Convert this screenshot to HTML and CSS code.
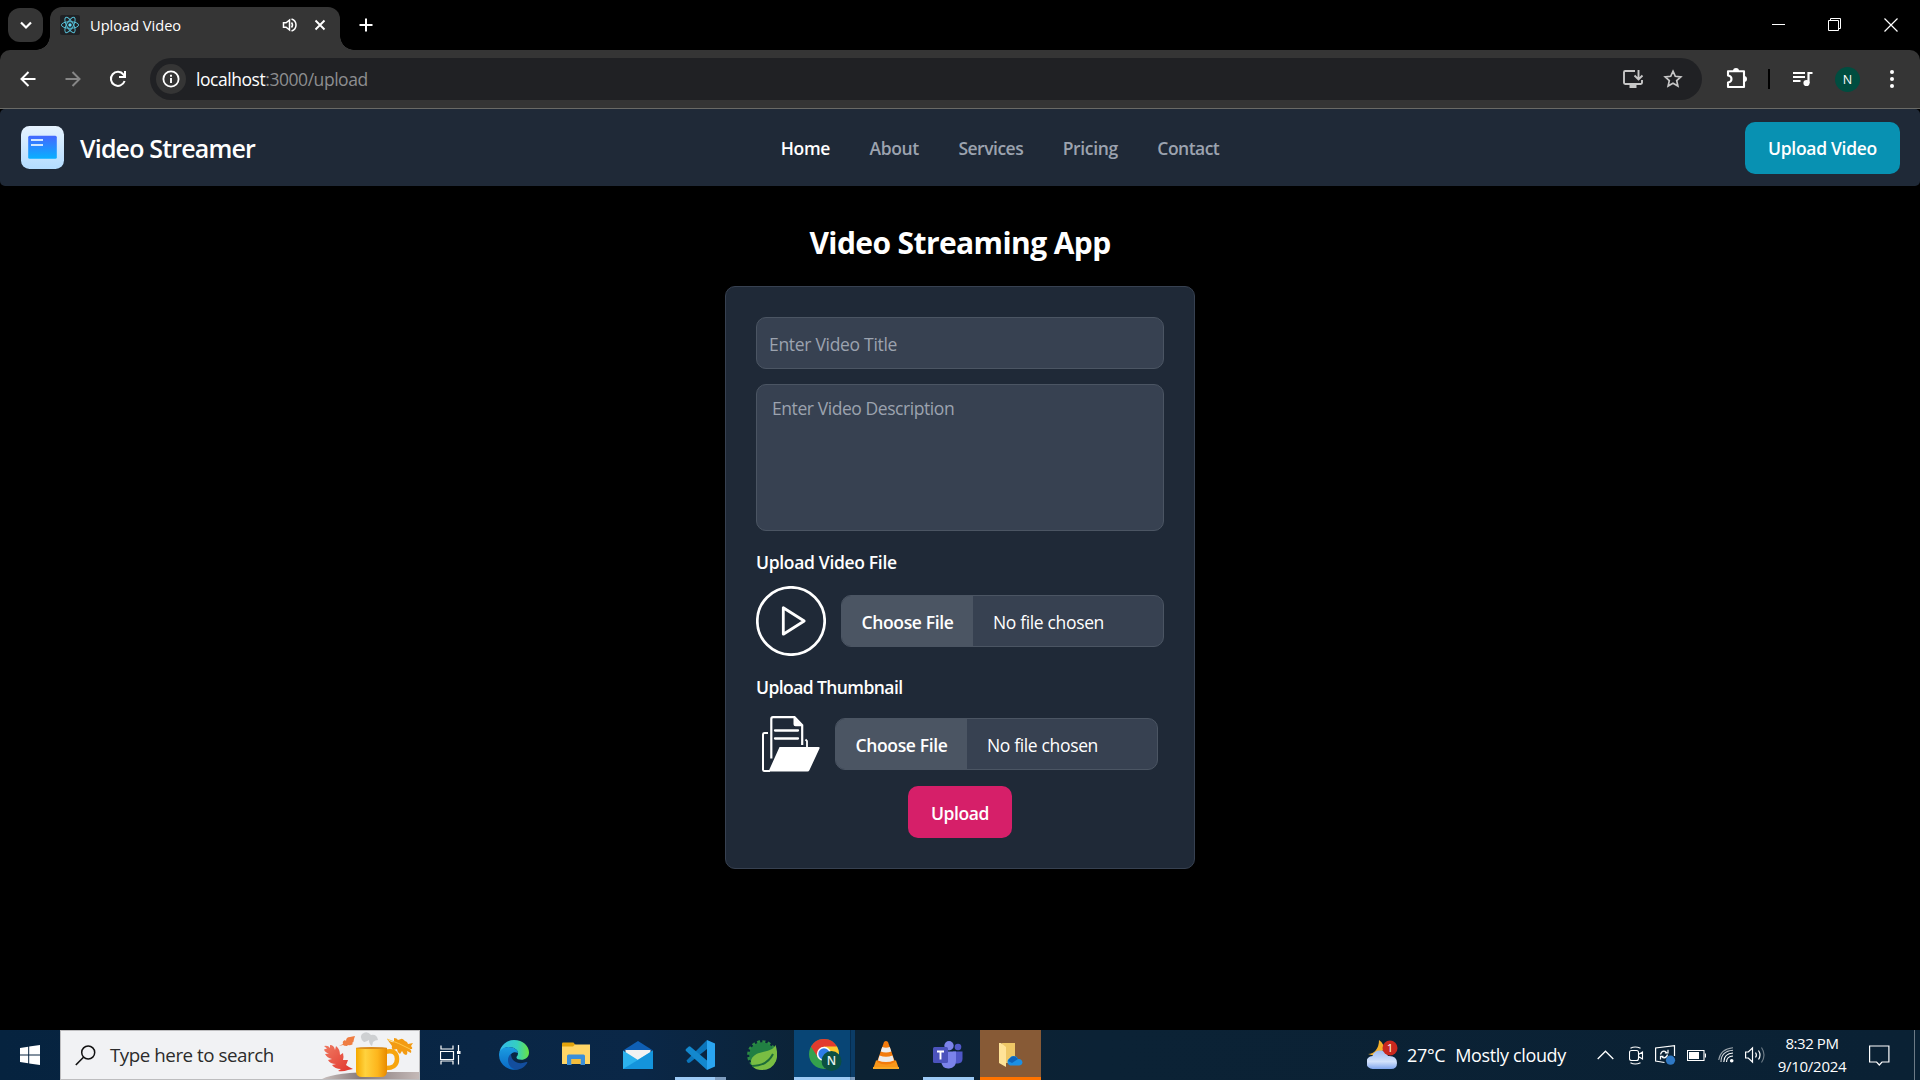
FILE: index.html
```html
<!DOCTYPE html>
<html lang="en">
<head>
<meta charset="utf-8">
<title>Upload Video</title>
<link rel="stylesheet" href="styles.css">
</head>
<body>
<div class="screen">
  <div class="tabstrip">
    <div class="tab-search"><svg width="36" height="34" viewBox="0 0 36 34"><path d="M13 14.500l5 5 5-5" fill="none" stroke="#fff" stroke-width="2.200"/></svg></div>
    <div class="tab">
      <svg class="favicon" width="20" height="20" viewBox="0 0 20 20"><rect width="20" height="20" rx="2" fill="#202124"/><g fill="none" stroke="#55bcd3" stroke-width="1"><ellipse cx="10" cy="10" rx="8.600" ry="3.300"/><ellipse cx="10" cy="10" rx="8.600" ry="3.300" transform="rotate(60 10 10)"/><ellipse cx="10" cy="10" rx="8.600" ry="3.300" transform="rotate(120 10 10)"/></g><circle cx="10" cy="10" r="1.700" fill="#61dafb"/></svg>
      <span class="tab-title">Upload Video</span>
      <svg class="speaker" width="16" height="16" viewBox="0 0 16 16"><path d="M1.500 5.800h2.600L7.500 3v10L4.100 10.200H1.500z" fill="none" stroke="#fff" stroke-width="1.500"/><path d="M9.500 5.500q2 2.500 0 5M9.500 2q4.500 1.500 4.500 6t-4.500 6" fill="none" stroke="#fff" stroke-width="1.500"/></svg>
      <svg width="12" height="12" viewBox="0 0 12 12"><path d="M1.500 1.500l9 9m0-9l-9 9" stroke="#fff" stroke-width="1.900"/></svg>
    </div>
    <svg class="newtab" width="14" height="14" viewBox="0 0 14 14"><path d="M7 .5v13M.5 7h13" stroke="#fff" stroke-width="2"/></svg>
    <div class="winctl">
      <svg width="13" height="13" viewBox="0 0 13 13"><path d="M0 6.500h13" stroke="#fff"/></svg>
      <svg width="13" height="13" viewBox="0 0 13 13"><path d="M.5 2.500h10v10H.5zM2.500 2.500v-2h10v10h-2" fill="none" stroke="#fff"/></svg>
      <svg width="14" height="14" viewBox="0 0 14 14"><path d="M.5.5l13 13m0-13l-13 13" stroke="#fff" stroke-width="1.200"/></svg>
    </div>
  </div>
  <div class="toolbar">
    <svg width="16" height="16" viewBox="0 0 16 16"><path d="M15.500 8H2M8.500 1L1.500 8l7 7" fill="none" stroke="#fff" stroke-width="2"/></svg>
    <svg width="16" height="16" viewBox="0 0 16 16"><path d="M.5 8H14M7.500 1l7 7-7 7" fill="none" stroke="#868686" stroke-width="2"/></svg>
    <svg width="18" height="18" viewBox="0 0 18 18"><path d="M15.600 11A7 7 0 1 1 14.500 4.600L16 6.500" fill="none" stroke="#fff" stroke-width="2"/><path d="M16 1v6h-6" fill="none" stroke="#fff" stroke-width="2"/></svg>
    <div class="omnibox">
      <div class="info"><svg width="18" height="18" viewBox="0 0 18 18"><circle cx="9" cy="9" r="7.600" fill="none" stroke="#fff" stroke-width="1.800"/><path d="M9 8v5M9 4.800v1.900" stroke="#fff" stroke-width="1.900"/></svg></div>
      <span class="url">localhost<i>:3000/upload</i></span>
      <svg class="install" width="22" height="20" viewBox="0 0 22 20"><path d="M13 2H3.200Q2 2 2 3.200v10.600Q2 15 3.200 15h15.600q1.200 0 1.200-1.200V11" fill="none" stroke="#c7c7c7" stroke-width="1.900"/><path d="M7.500 16h7v3h-7z" fill="#c7c7c7"/><path d="M16.500 1v9M12.500 6.500l4 4 4-4" fill="none" stroke="#c7c7c7" stroke-width="1.900"/></svg>
      <svg width="20" height="20" viewBox="0 0 20 20"><path d="M10 2.200l2.300 5.100 5.500.6-4.100 3.700 1.200 5.500-4.900-2.800-4.900 2.800 1.200-5.500-4.100-3.700 5.500-.6z" fill="none" stroke="#c7c7c7" stroke-width="1.700"/></svg>
    </div>
    <svg class="ext" width="22" height="22" viewBox="0 0 22 22"><path d="M18 8.800V3.200H2v4.300q3.500.5 3.500 3.500T2 14.500V19h16v-5.500M18 8v6" fill="none" stroke="#fff" stroke-width="2.100" stroke-linejoin="round"/><path d="M7 3a3 3 0 0 1 6 0zM18 8a3 3 0 0 1 0 6z" fill="#fff"/></svg>
    <span class="bar-sep"></span>
    <svg class="media" width="20" height="16" viewBox="0 0 20 16"><path d="M0 2h12M0 6h12M0 10h7.500" stroke="#fff" stroke-width="1.900"/><path d="M19.500 2h-4v10" fill="none" stroke="#fff" stroke-width="2.200"/><circle cx="13.500" cy="12" r="3.100" fill="#fff"/></svg>
    <span class="avatar">N</span>
    <svg class="dots" width="4" height="18" viewBox="0 0 4 18"><g fill="#fff"><circle cx="2" cy="2" r="2"/><circle cx="2" cy="9" r="2"/><circle cx="2" cy="16" r="2"/></g></svg>
  </div>
  <main class="page">
    <header class="site-header">
      <div class="brand">
        <svg width="44" height="44" viewBox="0 0 44 44"><defs><linearGradient id="lg1" x2="0" y2="1"><stop stop-color="#e6f3ff"/><stop offset="1" stop-color="#b3dcff"/></linearGradient><linearGradient id="lg2" x2="0" y2="1"><stop stop-color="#4468ff"/><stop offset="1" stop-color="#08b0ff"/></linearGradient></defs><rect x="0" y="0" width="43" height="43" rx="8.500" fill="url(#lg1)"/><rect x="7.200" y="9.800" width="28.600" height="23" rx="1.500" fill="url(#lg2)"/><path d="M10 14h12M10 19h12" stroke="#cfe6ff" stroke-width="2"/></svg>
        <span>Video Streamer</span>
      </div>
      <nav class="nav"><a class="active">Home</a><a>About</a><a class="n3">Services</a><a>Pricing</a><a class="n5">Contact</a></nav>
      <button class="btn btn-cyan">Upload Video</button>
    </header>
    <h1 class="title">Video Streaming App</h1>
    <form class="card">
      <input class="field title-field" placeholder="Enter Video Title">
      <textarea class="field desc-field" placeholder="Enter Video Description"></textarea>
      <div class="label l-video">Upload Video File</div>
      <div class="file-row">
        <svg width="70" height="70" viewBox="0 0 70 70"><circle cx="35" cy="35" r="33.700" fill="none" stroke="#fff" stroke-width="2.700"/><path d="M27.300 21.800v26.400L48.200 35z" fill="none" stroke="#fff" stroke-width="2.800" stroke-linejoin="round"/></svg>
        <div class="file"><span class="choose">Choose File</span><span class="chosen">No file chosen</span></div>
      </div>
      <div class="label l-thumb">Upload Thumbnail</div>
      <div class="file-row thumb">
        <svg width="58" height="56" viewBox="0 0 58 56"><path d="M1 54V18.500Q1 17 2.500 17H6M1 53.500q0 1.500 1.500 1.500H8" fill="none" stroke="#fff" stroke-width="2"/><path d="M9.300 42.500V3Q9.300 1.200 11 1.200h21.500l7.700 7.900v20" fill="none" stroke="#fff" stroke-width="2.200"/><path d="M31.500 1l9.300 9.300h-7.300q-2 0-2-2zM17.500 31H56.500q1.600 0 1 1.500L47.500 54q-.7 1.500-2 1.500H6.500z" fill="#fff"/><path d="M13 14.500h23M13 22.500h23" stroke="#fff" stroke-width="2.300" stroke-linecap="round"/><path d="M43.500 23.500l1.500 1.500v6" fill="none" stroke="#fff" stroke-width="1.800"/></svg>
        <div class="file"><span class="choose">Choose File</span><span class="chosen">No file chosen</span></div>
      </div>
      <button type="button" class="btn btn-pink">Upload</button>
    </form>
  </main>
  <footer class="taskbar">
    <div class="start"><svg width="20" height="20" viewBox="0 0 20 20"><path d="M0 3l8.200-1.200v7.700H0zM9.200 1.600L20 0v9.500H9.200zM0 10.500h8.200v7.700L0 17zM9.200 10.500H20V20L9.200 18.400z" fill="#fff"/></svg></div>
    <div class="search">
      <svg class="glass" width="21" height="21" viewBox="0 0 21 21"><circle cx="13.200" cy="7.500" r="6.500" fill="none" stroke="#111" stroke-width="1.500"/><path d="M8.500 12.200L.8 20" stroke="#111" stroke-width="1.600"/></svg>
      <span>Type here to search</span>
      <svg class="mug" width="100" height="48" viewBox="-1 0 100 48"><defs><linearGradient id="mg"><stop stop-color="#f5a800"/><stop offset=".3" stop-color="#ffd23e"/><stop offset=".7" stop-color="#fdb51c"/><stop offset="1" stop-color="#e88b00"/></linearGradient><linearGradient id="tb"><stop stop-color="#c9c0be"/><stop offset=".4" stop-color="#85797a"/><stop offset="1" stop-color="#c4b9b7"/></linearGradient><linearGradient id="lf" x2="1" y2="1"><stop stop-color="#ef7b62"/><stop offset="1" stop-color="#e1322b"/></linearGradient></defs>
        <path d="M2 48Q16 41 56 41h43v7z" fill="url(#tb)"/>
        <path d="M4 15q4-1 6 2l0-3q4 0 5 5l1-4q4 3 4 9l3-2q1 4 0 7l5 0q-1 3-2 5l3 2 4 2-5 1q-5 2-10 1l3-2q-6 0-9-4l4-1q-6 0-8-4l4-1q-5-1-7-5l4-.5q-4-1-5-4l3-1z" fill="url(#lf)"/>
        <path d="M19 15l4-2q-1-3 2-4l1 1q0-4 4-4l5-1-1 3q0 3-2 4l1 1q-3 2-5 1l-1 1q-3 0-4-1z" fill="#ef7d42"/>
        <path d="M67 8q4 4 7 3l0-4q3 0 4 2l3-1q1-1 4 2l2 1 1 2 5-1-2 3q2 2 1 3l-2 0q2 2 1 4l-4-2q1 3-1 4-3-1-4-4l-2 3q-3-2-3-5l-4 1q-2-2-1-4z" fill="#f39b12"/><path d="M67 8q12 4 23 10" fill="none" stroke="#ffc94a" stroke-width="1"/>
        <path d="M44 11q-5-4-2-8 5-4 9 1 6-1 7 5-3 0-5 2l-1 4q-3-2-3-6-4 2-5 2z" fill="#c2c4c7" opacity=".75"/>
        <path d="M65 21q12-3 12 7t-13 9" fill="none" stroke="#f7a50d" stroke-width="4.500"/>
        <path d="M36 17h31v23q0 6-6 6H42q-6 0-6-6z" fill="url(#mg)"/><ellipse cx="51.500" cy="17" rx="15.500" ry="1" fill="#d98a1a"/></svg>
    </div>
    <div class="app taskview"><svg width="21" height="20" viewBox="0 0 21 20"><path d="M1 .5v3.500h12V.5M1 19.500v-3.500h12v3.500M.5 6.500h13v8H.5zM18.500 0v6M18.500 10v9.500" fill="none" stroke="#fff" stroke-width="1.200"/><path d="M17 6h3.500v3H17z" fill="#fff"/></svg></div>
    <div class="app"><svg width="30" height="30" viewBox="0 0 30 30"><defs><linearGradient id="e1"><stop stop-color="#32b9ee"/><stop offset=".6" stop-color="#35cfc0"/><stop offset="1" stop-color="#69e342"/></linearGradient><linearGradient id="e2" x2="0" y2="1"><stop stop-color="#1b9de2"/><stop offset="1" stop-color="#0a68c4"/></linearGradient></defs><path d="M.3 13A15 15 0 0 1 15 0c9 0 15 6 15 12.500 0 5-4 7.300-7.500 7.300-3 0-5-1-5-2.300s1.500-1.500 1.500-4.500S15 7 9.500 7 .3 13 .3 13z" fill="url(#e1)"/><path d="M0 15C0 10 4 7 9.500 7 15 7 19 10 19 13c-4-2-8 0-8 5 0 6 5 10 10 10.500A15 15 0 0 1 0 15z" fill="url(#e2)"/><path d="M12 14c-5 3-4 14 5 15.500 4 .5 9-2.500 11.200-6.500.5-1-.4-1.300-1-.9C20 25 12 22 12 14z" fill="#134e9e"/></svg></div>
    <div class="app"><svg width="28" height="26" viewBox="0 0 28 26"><path d="M0 1.500Q0 .5 1 .5h10.500l2 2.500-2 2H0z" fill="#e2a30b"/><path d="M0 4.500h11l2-2h15V22H0z" fill="#ffd566"/><path d="M5 23v-9q0-1.500 1.500-1.500h15q1.500 0 1.500 1.500v9h-4.500v-6h-9v6z" fill="#3b8fd9"/><path d="M9.500 17h9v5h-9z" fill="#f3bc3c"/></svg></div>
    <div class="app"><svg width="30" height="28" viewBox="0 0 30 28"><path d="M0 9.500L15 0l15 9.500z" fill="#0f5fb4"/><path d="M2.500 9h25v10h-25z" fill="#f2f2f2"/><path d="M0 9.500L15 19 30 9.500V28H0z" fill="#2cb2ee"/><path d="M0 28L30 9.500V28z" fill="#1494dc"/><path d="M0 28L15 19 30 9.500z" fill="#40c8f6" opacity=".6"/></svg></div>
    <div class="app run"><svg width="30" height="30" viewBox="0 0 30 30"><path d="M1.500 20.500L22 0v9L5 22.500q-1.500 1-2.700-.2z" fill="#0b75bb"/><path d="M1 9l2.500-2.300q1-.7 2 0L22 20.500V30L1 11q-1-1 0-2z" fill="#1388ce"/><path d="M22 0l8 3.500v23L22 30z" fill="#2aa5f1"/></svg></div>
    <div class="app"><svg width="30" height="30" viewBox="0 0 30 30"><circle cx="15" cy="15" r="12.800" fill="#218043"/><circle cx="15" cy="15" r="13.600" fill="none" stroke="#2c8b43" stroke-width="2.500" stroke-dasharray="3 2.340"/><path d="M28.500 5q3 9 .5 16-4 9-14 9-6 0-9.500-3.500Q1 19 9.500 14C16 11 25 12 28.500 5z" fill="#79bd43"/><path d="M5 26q15 0 21-12" fill="none" stroke="#1d6c39" stroke-width="2"/></svg></div>
    <div class="app active"><svg width="33" height="33" viewBox="0 0 33 33"><circle cx="15" cy="15" r="15" fill="#34a14d"/><path d="M15 15L2 7.500A15 15 0 0 1 28 7.500z" fill="#e33b2e"/><path d="M15 7.500h13A15 15 0 0 1 16 30l6-11z" fill="#fdc92d"/><path d="M2 7.500l7 11L15 7.500z" fill="#e33b2e"/><circle cx="15" cy="15" r="7.200" fill="#fff"/><circle cx="15" cy="15" r="5.700" fill="#2f7de9"/><circle cx="22.500" cy="22" r="10" fill="#0b5043"/><text x="22.500" y="26.400" text-anchor="middle" class="badge-n">N</text></svg></div>
    <div class="app"><svg width="26" height="28" viewBox="0 0 26 28"><path d="M3 19.500h20l3 8.500H0z" fill="#f8971a"/><path d="M11 1q2-2 4 0l7 20q-9 5-18 0z" fill="#f37b0c"/><path d="M9.200 6q3.800 1.500 7.600 0l1.500 4.500q-5.300 2-10.600 0zM6.500 14.500q6.500 2.500 13 0l1.500 5q-8 3-16 0z" fill="#ececec"/><path d="M0 26h26v2H0z" fill="#f9a825"/></svg></div>
    <div class="app run solo"><svg width="30" height="28" viewBox="0 0 30 28"><circle cx="25" cy="6" r="3.300" fill="#5159c9"/><path d="M20 10.500h9.500V18q0 4-4.500 4.500h-4z" fill="#4f57c7"/><circle cx="16" cy="4.700" r="4.700" fill="#7c83ea"/><path d="M8 10.500h15V20q0 7-7 7.500T8 20z" fill="#7b83eb"/><rect y="6" width="15" height="16" rx="1.500" fill="#4b53bc"/><path d="M4 10.500h7M7.500 10.500v8" stroke="#fff" stroke-width="1.900"/></svg></div>
    <div class="app attention"><svg width="24" height="28" viewBox="0 0 24 28"><path d="M3 2h13v20H6z" fill="#eec766"/><path d="M0 2h2l5 4v20l-7-4z" fill="#ffe397"/><path d="M11 24.500a4 4 0 0 1 0-7.500q1-2.500 4-2 3 0 4 3 4-.5 4.500 3.500-.5 3-3.500 3z" fill="#1b8fe3"/><path d="M11 17q4-4 8 1l-6 4-4-2z" fill="#0e63b9"/></svg></div>
    <div class="weather">
      <svg width="32" height="30" viewBox="0 0 32 30"><defs><linearGradient id="cl" x2="0" y2="1"><stop stop-color="#9ebcf2"/><stop offset=".6" stop-color="#d3e2fb"/><stop offset="1" stop-color="#7fa5ed"/></linearGradient></defs><path d="M12 0q6 4 4 10-4 8-15 4 5 0 8-4t3-10z" fill="#f5b02a"/><path d="M6 29a6.500 6.500 0 0 1-.5-13Q7 10.500 13 10.500q6 0 8 5.500 9-.5 9 7 0 6-6 6z" fill="url(#cl)"/><circle cx="23" cy="8" r="7.500" fill="#c9281e"/><text x="23" y="12.200" text-anchor="middle" class="badge-1">1</text></svg>
      <span class="temp">27°C</span><span class="cond">Mostly cloudy</span>
    </div>
    <div class="tray">
      <svg width="17" height="10" viewBox="0 0 17 10"><path d="M.7 9L8.500 1.200 16.300 9" fill="none" stroke="#fff" stroke-width="1.300"/></svg>
      <svg class="cam" width="15" height="19" viewBox="0 0 15 19"><path d="M2.500 4.500h5q2 0 2 2v6q0 2-2 2h-5q-2 0-2-2v-6q0-2 2-2zM9.500 8.500l4-2.500v7l-4-2.500M1.500 2.300q4.500-2.500 10 0M1.500 16.700q4.500 2.500 10 0" fill="none" stroke="#fff" stroke-width="1.100"/></svg>
      <svg width="21" height="20" viewBox="0 0 21 20"><path d="M9.500 17.500L.6 16V3L19.500.7V11" fill="none" stroke="#fff" stroke-width="1.200"/><path d="M5.500 9.500q1-4 4.500-3.200l2 1.700M13 4.800V8H9.800M12.500 9.500q-1 4-4.500 3.200L6 11M5.500 14.500v-3.200h3" fill="none" stroke="#fff" stroke-width="1.200"/><circle cx="15.500" cy="15.200" r="4.600" fill="#2f78c4"/></svg>
      <svg width="19" height="11" viewBox="0 0 19 11"><path d="M.5.5h16.500v10H.5zM18.500 3.500v4" fill="none" stroke="#fff" stroke-width="1.100"/><path d="M2 2h10v7H2z" fill="#fff"/></svg>
      <svg class="wifi" width="16" height="16" viewBox="0 0 16 16"><circle cx="13.700" cy="13.800" r="1.800" fill="#fff"/><g fill="none" stroke="#fff" stroke-width="1.100"><path d="M8.500 15q0-5.500 6.500-6"/><path d="M5.800 15Q6 6.500 15 6"/><path d="M3 15Q3 4 15 3.200" opacity=".8"/><path d="M.7 13Q2.500 2 15 .8" opacity=".6"/></g></svg>
      <svg width="21" height="18" viewBox="0 0 21 18"><path d="M.6 6h2.700L7.500 2v14l-4.200-4H.6z" fill="none" stroke="#fff" stroke-width="1.200"/><g fill="none" stroke="#fff" stroke-width="1.200"><path d="M10.500 6.500q1.800 2.500 0 5"/><path d="M13.500 4.500q3 4.500 0 9"/><path d="M16.500 1.500q5 7.500 0 15" opacity=".4"/></g></svg>
    </div>
    <div class="clock"><span class="time">8:32 PM</span><span class="date">9/10/2024</span></div>
    <svg class="notif" width="21" height="21" viewBox="0 0 21 21"><path d="M.6 1h19.300v16H13l-2.700 3-2.700-3h-7z" fill="none" stroke="#fff" stroke-width="1.200"/></svg>
    <span class="peek"></span>
  </footer>
</div>
</body>
</html>
```
FILE: styles.css
```css
* { box-sizing: border-box; }
body { margin: 0; background: #000; color: #fff; font: 17.5px/25px "Open Sans", "Noto Sans", sans-serif; }
svg { display: block; flex: none; }
span, a { white-space: nowrap; }
.screen { width: 1920px; height: 1080px; display: flex; flex-direction: column; overflow: hidden; }

.tabstrip { height: 50px; display: flex; align-items: flex-start; }
.tab-search { margin: 8px 0 0 8px; width: 35px; height: 34px; border-radius: 12px; background: #353535; }
.tab { position: relative; margin: 7px 0 0 7px; width: 290px; height: 43px; padding: 0 14px 7px 10px; border-radius: 12px 12px 0 0; background: #353535; display: flex; align-items: center; }
.tab::before, .tab::after { content: ""; position: absolute; bottom: 0; width: 14px; height: 14px; }
.tab::before { left: -14px; background: radial-gradient(circle at 0 0, transparent 13.5px, #353535 14px); }
.tab::after { right: -14px; background: radial-gradient(circle at 100% 0, transparent 13.5px, #353535 14px); }
.tab-title { margin-left: 10px; font-size: 14.6px; }
.speaker { margin: 0 16px 0 auto; }
.newtab { margin: 18px 0 0 19px; }
.winctl { margin: 18px 22px 0 auto; display: flex; gap: 43px; }

.toolbar { height: 59px; padding: 0 23px 0 20px; border-bottom: 1px solid #6a6a66; border-radius: 10px 10px 0 0; background: #353535; display: flex; align-items: center; }
.toolbar > svg:nth-child(2) { margin-left: 29px; }
.toolbar > svg:nth-child(3) { margin-left: 28px; }
.omnibox { margin-left: 23px; width: 1552px; height: 42px; padding: 0 19px 0 6px; border-radius: 21px; background: #202124; display: flex; align-items: center; }
.info { width: 30px; height: 30px; border-radius: 50%; background: #353535; display: grid; place-items: center; }
.url { margin-left: 10px; letter-spacing: -0.45px; }
.url i { font-style: normal; color: #8d8e90; }
.install { margin: 0 19px 0 auto; }
.ext { margin-left: 24px; }
.bar-sep { width: 2px; height: 20px; margin-left: 20px; background: #000; }
.media { margin-left: 23px; }
.avatar { margin: 0 0 0 22px; width: 25px; height: 25px; border-radius: 50%; background: #004d40; font-size: 12.5px; text-align: center; }
.dots { margin-left: auto; margin-right: 3px; }

.page { flex: 1; display: flex; flex-direction: column; align-items: center; }
.site-header { width: 100%; height: 77px; padding: 0 20px 0 21px; border-radius: 5px; background: #1f2937; display: flex; align-items: center; justify-content: space-between; font-weight: 600; }
.brand { display: flex; align-items: center; gap: 15px; font-size: 25px; letter-spacing: -0.83px; }
.brand span { padding-top: 2px; }
.nav { display: flex; gap: 39.5px; padding-top: 2px; color: #9ca3af; letter-spacing: -0.35px; }
.nav .active { color: #fff; }
.nav .n3 { letter-spacing: -0.5px; }
.nav .n5 { letter-spacing: -0.52px; }
.btn { height: 52px; padding: 2px 0 0; border: 0; border-radius: 10px; color: #fff; font: 600 17.5px/25px "Open Sans", "Noto Sans", sans-serif; }
.btn-cyan { width: 155px; background: #0891b2; letter-spacing: -0.3px; }
.btn-pink { width: 104px; background: #d61f69; margin: 14px auto 0; letter-spacing: -0.42px; }
.title { margin: 38px 0 24px; font-size: 30px; line-height: 38px; letter-spacing: -0.6px; }
.card { width: 470px; height: 583px; padding: 30px; border: 1px solid #374151; border-radius: 10px; background: #1f2937; display: flex; flex-direction: column; }
.field { border: 1px solid #4b5563; border-radius: 10px; background: #374151; color: #fff; font: 17.5px/25px "Open Sans", "Noto Sans", sans-serif; outline: 0; resize: none; }
.field::placeholder { color: #9ca3af; opacity: 1; }
.title-field { height: 52px; padding: 2px 12px 0; letter-spacing: -0.3px; }
.desc-field { height: 148px; margin-top: 15px; padding: 11px 15px; letter-spacing: -0.43px; }
.label { font-weight: 600; }
.l-video { margin-top: 19px; letter-spacing: -0.32px; }
.l-thumb { margin-top: 19px; letter-spacing: -0.58px; }
.file-row { margin-top: 11px; display: flex; align-items: center; gap: 15px; }
.thumb { margin-top: 16px; padding: 0 6px; }
.file { flex: 1; height: 52px; border: 1px solid #4b5563; border-radius: 10px; background: #374151; display: flex; align-items: center; overflow: hidden; }
.choose { width: 131px; height: 50px; background: #4b5563; font-weight: 600; line-height: 52px; text-align: center; letter-spacing: -0.37px; }
.chosen { margin-left: 20px; padding-top: 2px; letter-spacing: -0.35px; }

.taskbar { height: 50px; background: linear-gradient(90deg, #06233f 0, #0a2747 640px, #0c2233 850px, #0b2235 1100px, #0a2134 100%); display: flex; align-items: stretch; }
.start { width: 60px; display: grid; place-items: center; }
.search { width: 360px; border: 1px solid #bdbdbf; background: #f1f2f4; color: #2b2b2b; display: flex; align-items: center; padding-left: 14px; font-size: 18.75px; letter-spacing: -0.46px; }
.search span { margin-left: 14px; padding-bottom: 1px; }
.search .mug { margin-left: auto; }
.app { position: relative; width: 62px; display: flex; align-items: center; justify-content: center; }
.taskview { width: 63px; padding-right: 2px; }
.run::after, .active.app::after, .attention::after { content: ""; position: absolute; left: 6px; bottom: 0; width: 51px; height: 3px; background: linear-gradient(90deg, #9ccaf5 40px, #7e9dbf 40px); }
.solo::after { background: #9ccaf5; }
.active.app { background: linear-gradient(90deg, #084575 56px, #052c4e 56px, #052c4e 57px, #0b3c66 57px); margin-left: 1px; width: 61px; padding-left: 2px; }
.active.app::after { left: 0; width: 61px; background: linear-gradient(90deg, #9ccaf5 56px, #6b8dae 56px, #7e9dbf 58px); }
.attention { width: 61px; margin-left: 1px; background: #875a36; }
.attention::after { left: 0; width: 61px; background: #ff7300; }
.badge-n { font: 600 12px "Open Sans", sans-serif; fill: #e6efed; }
.badge-1 { font: 11.5px "Open Sans", sans-serif; fill: #fff; }
.weather { margin-left: auto; width: 230px; display: flex; align-items: center; font-size: 18px; }
.temp { margin-left: 8px; letter-spacing: -0.35px; }
.cond { margin-left: 10px; letter-spacing: -0.36px; }
.tray { display: flex; align-items: center; gap: 11px; width: 169px; }
.cam { margin-left: 4px; }
.wifi { margin-left: 1px; }
.clock { width: 92px; display: flex; flex-direction: column; align-items: center; font-size: 15px; line-height: 23px; padding-top: 2px; }
.time { letter-spacing: -0.44px; }
.date { letter-spacing: -0.26px; }
.notif { margin: 15px 0 0 11px; }
.peek { width: 1px; margin: 0 5px 0 24px; background: #6c7a86; }
```
